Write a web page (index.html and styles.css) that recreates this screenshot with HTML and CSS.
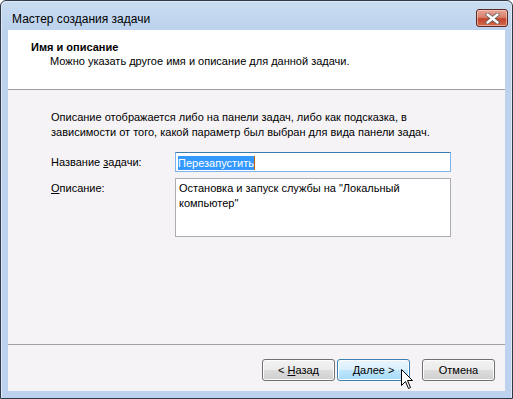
FILE: index.html
```html
<!DOCTYPE html>
<html lang="ru">
<head>
<meta charset="utf-8">
<title>Мастер создания задачи</title>
<link rel="stylesheet" href="styles.css">
</head>
<body>
<div class="window">
  <div class="titlebar">
    <span class="title">Мастер создания задачи</span>
    <button class="close" aria-label="Закрыть">
      <svg width="15" height="11" viewBox="0 0 15 11"><path d="M2.5 1.5 L12.5 9.5 M12.5 1.5 L2.5 9.5" stroke="#5a5a5a" stroke-width="4" stroke-linecap="round"/><path d="M2.5 1.5 L12.5 9.5 M12.5 1.5 L2.5 9.5" stroke="#ffffff" stroke-width="2.4" stroke-linecap="round"/></svg>
    </button>
  </div>
  <div class="client">
    <div class="header">
      <div class="h-title">Имя и описание</div>
      <div class="h-sub">Можно указать другое имя и описание для данной задачи.</div>
    </div>
    <div class="body">
      <p class="intro">Описание отображается либо на панели задач, либо как подсказка, в<br>зависимости от того, какой параметр был выбран для вида панели задач.</p>
      <div class="form">
        <label class="lbl">Название <u>з</u>адачи:</label>
        <div class="input focused"><span class="sel">Перезапустить</span><span class="caret"></span></div>
        <label class="lbl"><u>О</u>писание:</label>
        <div class="textarea">Остановка и запуск службы на "Локальный<br>компьютер"</div>
      </div>
    </div>
    <div class="footer">
      <button class="btn">&lt; <u>Н</u>азад</button>
      <button class="btn hover"><u>Д</u>алее &gt;</button>
      <button class="btn cancel">Отмена</button>
    </div>
  </div>
  <svg class="cursor" width="13" height="21" viewBox="0 0 13 21"><path d="M0.5 0.5 L0.5 16.5 L4.5 12.5 L7.5 19.5 L9.5 18.5 L6.5 11.5 L11.5 11.5 Z" fill="#ffffff" stroke="#000000" stroke-width="1"/></svg>
</div>
</body>
</html>
```
FILE: styles.css
```css
* { box-sizing: border-box; }
html, body { margin: 0; padding: 0; background: #ffffff; }
body { width: 513px; height: 399px; overflow: hidden; font-family: "Liberation Sans", Arial, sans-serif; font-size: 11px; color: #000; }

.window {
  position: relative;
  width: 513px; height: 399px;
  border: 1px solid #2f3a48;
  border-radius: 6px 6px 0 0;
  background: linear-gradient(#c9dcf1 0px, #bcd2ed 30px, #bcd2ee 100%);
  box-shadow: inset 1px 1px 0 #dfe9f6, inset -1px 0 0 #dfe9f6;
  padding: 0 7px 7px 7px;
  display: flex; flex-direction: column;
}

.titlebar {
  height: 29px;
  display: flex; align-items: flex-start; justify-content: space-between;
}
.title {
  font-family: "Liberation Sans", Arial, sans-serif;
  font-size: 12px;
  color: #000;
  margin: 11px 0 0 4px;
}
.close {
  margin: 8px -3px 0 0;
  width: 32px; height: 18px;
  border: 1px solid #5b2a21;
  border-radius: 3px;
  background: linear-gradient(#e8a597 0%, #d8806c 45%, #c4452c 55%, #cf6a4f 100%);
  box-shadow: inset 0 0 0 1px rgba(255,210,200,0.6);
  padding: 0;
  display: flex; align-items: center; justify-content: center;
}

.client {
  flex: 1;
  display: flex; flex-direction: column;
  background: #f6f3f6;
}
.header {
  height: 60px;
  background: #ffffff;
  border-bottom: 1px solid #a0a0a0;
  padding: 11px 0 0 23px;
}
.h-title { font-weight: bold; font-size: 11px; line-height: 13px; }
.h-sub { padding-left: 19px; line-height: 13px; margin-top: 1px; }

.body { flex: 1; padding: 20px 0 0 43px; }
.intro { margin: 0; line-height: 15px; }
.form {
  display: grid;
  grid-template-columns: 124px 276px;
  row-gap: 6px;
  margin-top: 12px;
}
.lbl { padding-top: 4px; }
.input {
  height: 20px;
  border: 1px solid #7eb4ea;
  border-top-color: #3d7bad;
  background: #fff;
  padding: 2px 0 0 2px;
  display: flex; align-items: center;
}
.sel { background: #3399ff; color: #fff; line-height: 14px; }
.caret { width: 1px; height: 14px; background: #c86400; }
.textarea {
  height: 59px;
  border: 1px solid #abadb3;
  background: #fff;
  padding: 2px 0 0 3px;
  line-height: 15px;
}

.footer {
  height: 47px;
  border-top: 1px solid #a0a0a0;
  display: flex; justify-content: flex-end; align-items: flex-start;
  padding: 14px 10px 0 0;
}
.btn {
  width: 73px; height: 22px;
  margin-left: 2px;
  font-family: "Liberation Sans", Arial, sans-serif;
  font-size: 11px;
  color: #000;
  border: 1px solid #707070;
  border-radius: 3px;
  background: linear-gradient(#f2f2f2 0%, #ebebeb 50%, #dddddd 50%, #cfcfcf 100%);
  box-shadow: inset 0 0 0 1px #fcfcfc;
  padding: 0;
}
.btn.hover {
  border-color: #3c7fb1;
  background: linear-gradient(#eaf6fd 0%, #d9f0fc 50%, #bee6fd 50%, #a7d9f5 100%);
}
.btn.cancel { margin-left: 12px; }

.cursor { position: absolute; left: 400px; top: 368px; }
```
